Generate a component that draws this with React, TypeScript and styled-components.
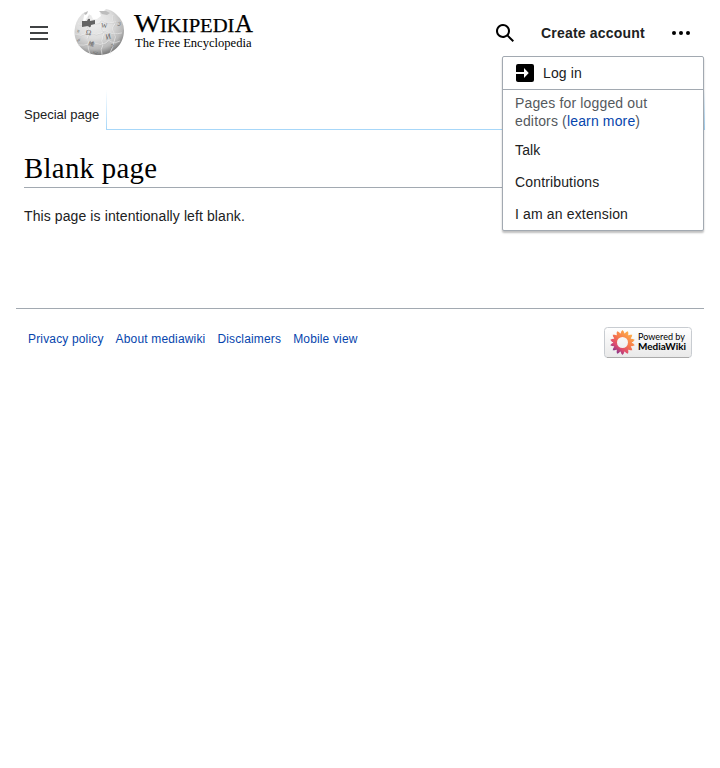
import React from "react";
import styled, { createGlobalStyle } from "styled-components";

const GlobalStyle = createGlobalStyle`
  *, *::before, *::after { box-sizing: border-box; }
  body {
    margin: 0;
    background: #fff;
    color: #202122;
    font: 14px/22px "Liberation Sans", Arial, sans-serif;
  }
`;

const Page = styled.div`
  padding: 0 16px;
`;

const Header = styled.header`
  display: flex;
  align-items: center;
  height: 66px;
  padding: 0 13px;
`;

const Icon = styled.svg<{ $color?: string }>`
  display: block;
  flex: none;
  width: 20px;
  height: 20px;
  fill: ${(p) => p.$color ?? "#000"};
`;

const IconButton = styled.button`
  display: block;
  padding: 0;
  border: 0;
  background: none;
`;

const Logo = styled.a`
  display: flex;
  margin-left: 25px;
  height: 66px;
`;

const Drawing = styled.svg`
  display: block;
  flex: none;
`;

const UserTools = styled.div`
  display: flex;
  align-items: center;
  margin-left: auto;
`;

const CreateAccount = styled.a`
  margin: 0 26px;
  width: 104px;
  font-weight: bold;
  letter-spacing: 0.2px;
  white-space: nowrap;
`;

const MoreTools = styled.div`
  position: relative;
  width: 20px;
`;

const Menu = styled.div`
  position: absolute;
  top: 33px;
  right: -13px;
  z-index: 1;
  width: 202px;
  height: 175px;
  border: 1px solid #a2a9b1;
  border-radius: 2px;
  background: #fff;
  box-shadow: 0 2px 2px rgba(0, 0, 0, 0.25);
  letter-spacing: 0.15px;
`;

const LoginItem = styled.a`
  display: flex;
  align-items: center;
  gap: 8px;
  height: 33px;
  padding: 0 12px;
  border-bottom: 1px solid #a2a9b1;
`;

const MenuNote = styled.p`
  margin: 0;
  padding: 4px 12px 0;
  height: 44px;
  line-height: 18px;
  color: #54595d;
`;

const MenuItem = styled.a`
  display: block;
  height: 32px;
  padding: 0 12px;
  line-height: 32px;
`;

const Link = styled.a`
  color: #0645ad;
`;

const TabBar = styled.nav`
  display: flex;
  height: 40px;
  margin: 24px -1px 0 0;
`;

const ActiveTab = styled.a`
  width: 90px;
  padding: 14px 0 0 8px;
  font-size: 13px;
  white-space: nowrap;
`;

const TabRule = styled.div`
  flex: 1;
  border-bottom: 1px solid #a7d7f9;
  background:
    linear-gradient(to bottom, #fff, #a7d7f9) left / 1px 100% no-repeat,
    linear-gradient(to bottom, #fff, #a7d7f9) right / 1px 100% no-repeat;
`;

const Content = styled.main`
  height: 178px;
  padding: 0 8px;
`;

const Title = styled.h1`
  margin: 0;
  height: 58px;
  padding-top: 20px;
  border-bottom: 1px solid #a2a9b1;
  color: #000;
  font: 400 28.8px/37px "Liberation Serif", serif;
  letter-spacing: 0.3px;
`;

const Paragraph = styled.p`
  margin: 17px 0 0;
  letter-spacing: 0.1px;
`;

const Footer = styled.footer`
  display: flex;
  justify-content: space-between;
  align-items: flex-start;
  padding: 18px 12px 0;
  border-top: 1px solid #a2a9b1;
`;

const FooterLinks = styled.nav`
  display: flex;
  gap: 12px;
  padding-top: 3px;
  font-size: 12px;
  line-height: 18px;
  letter-spacing: 0.16px;
`;

const puzzleSeams = [
  "M4 14q5 3 9 0q1-4 4-2q4 3 8 1q2-5 5-1q5 2 12 0",
  "M1 24q6 3 10 0q2-5 5-1q6 3 12 0q1-4 5-1q6 3 15 1",
  "M4 35q6 1 11-1q2-4 5-1q6 3 12 0q2-4 5-1q4 2 9-1",
  "M15 4q-3 6 0 9q-4 4-1 6q2 6-1 10q3 2 1 5q0 5 2 10",
  "M28 13q-3 5 0 8q4 1 1 5q-2 5 0 9q-3 4-1 10",
  "M39 5q-1 6 2 9q-4 4-1 8q3 5 0 10q-1 5-4 11",
];

const globeLetters: [string, number, number, number, number][] = [
  ["Ω", 11.5, 24.5, 7.5, 8],
  ["W", 27, 17.5, 6.5, 4],
  ["И", 32, 29.5, 7.5, -12],
  ["維", 14, 35, 6, 18],
  ["в", 3, 22, 5, 12],
  ["う", 42, 14, 5, 35],
  ["7", 36, 38, 6, 15],
  ["é", 3, 31, 5, 30],
  ["ت", 19, 43, 5, 10],
];

const Globe = () => (
  <Drawing width="50" height="66" viewBox="0 0 50 66">
    <defs>
      <radialGradient id="globe" cx="40%" cy="28%" r="72%">
        <stop offset="0" stopColor="#f1f1f1" />
        <stop offset=".5" stopColor="#dedede" />
        <stop offset=".82" stopColor="#b9b9b9" />
        <stop offset="1" stopColor="#808080" />
      </radialGradient>
    </defs>
    <g transform="translate(0 10)">
      <path
        fill="url(#globe)"
        d="M8 4l3-2-1 4-1 5h2l3-5 3-1 2 4h4l4-3-1-3 4-2 2-2q6 1 10 5q8 7 8 16.5c0 14-11 24.5-25 24.5S0 34.5 .5 21Q1 11 8 4z"
      />
      <path fill="#bdbdbd" d="M10 3l4-2-1 3-2 1zM25 1l7 0 4 2-3 2-5-1z" />
      <g fill="none" stroke="#f6f6f6" strokeWidth=".6">
        {puzzleSeams.map((d) => (
          <path key={d} d={d} />
        ))}
      </g>
      <g fill="none" stroke="#aaa" strokeWidth=".25" transform="translate(.5 .5)">
        {puzzleSeams.map((d) => (
          <path key={d} d={d} />
        ))}
      </g>
      <path fill="#646464" d="M8 11l5 0q1-3 3-2v2l5-1v4l-4 1q0 3-2 2l-1-1-6 1z" />
      <g fill="#606060" fontFamily="Liberation Serif, Noto Sans CJK SC, DejaVu Sans, serif">
        {globeLetters.map(([letter, x, y, size, angle]) => (
          <text key={letter} fontSize={size} transform={`translate(${x} ${y}) rotate(${angle})`}>
            {letter}
          </text>
        ))}
      </g>
    </g>
  </Drawing>
);

const Wordmark = () => (
  <Drawing
    width="150"
    height="66"
    viewBox="124 0 150 66"
    fontFamily="Liberation Serif, serif"
    fill="#000"
  >
    <g stroke="#000" strokeWidth=".25">
      <text x="134" y="32" fontSize="25.5" textLength="27" lengthAdjust="spacingAndGlyphs">W</text>
      <text x="160" y="32" fontSize="18.5" textLength="74.5" lengthAdjust="spacingAndGlyphs">IKIPEDI</text>
      <text x="234.8" y="32" fontSize="26" textLength="18.2" lengthAdjust="spacingAndGlyphs">A</text>
    </g>
    <text x="135" y="47" fontSize="12.8" textLength="116.5" lengthAdjust="spacingAndGlyphs">
      The Free Encyclopedia
    </text>
  </Drawing>
);

const petals = Array.from({ length: 14 }, (_, i) => (i * 360) / 14);

const MediaWikiBadge = () => (
  <Drawing width="88" height="31" viewBox="0 0 88 31">
    <defs>
      <linearGradient id="badge" x2="0" y2="1">
        <stop stopColor="#fff" />
        <stop offset="1" stopColor="#e9e9e9" />
      </linearGradient>
      <linearGradient id="flower" gradientUnits="userSpaceOnUse" x1="26" y1="6" x2="11" y2="25">
        <stop stopColor="#fdb04a" />
        <stop offset=".45" stopColor="#f6764c" />
        <stop offset=".75" stopColor="#dd4a70" />
        <stop offset="1" stopColor="#82368c" />
      </linearGradient>
      <mask id="flower-shape" maskUnits="userSpaceOnUse" x="0" y="0" width="36" height="31">
        <circle cx="18.5" cy="15.5" r="9.2" fill="#fff" />
        {petals.map((angle) => (
          <path
            key={angle}
            fill="#fff"
            d="M16 8L17.3 4.5L18.5 3L19.7 4.5L21 8z"
            transform={`rotate(${angle} 18.5 15.5)`}
          />
        ))}
        <circle cx="18.5" cy="15.5" r="5.5" fill="#000" />
      </mask>
    </defs>
    <rect x=".5" y=".5" width="87" height="30" rx="3" fill="url(#badge)" stroke="#c8ccd1" />
    <path d="M3 30.5h82" stroke="#aaa" />
    <rect width="36" height="31" fill="url(#flower)" mask="url(#flower-shape)" />
    <g fontFamily="Lato, sans-serif" fill="#000">
      <text x="34" y="12.8" fontSize="9" textLength="47" lengthAdjust="spacingAndGlyphs">Powered by</text>
      <text x="34" y="23.2" fontSize="9.6" fontWeight="700" textLength="48" lengthAdjust="spacingAndGlyphs">
        MediaWiki
      </text>
    </g>
  </Drawing>
);

export default function App() {
  return (
    <>
      <GlobalStyle />
      <Page>
        <Header>
          <IconButton aria-label="Toggle sidebar">
            <Icon $color="#404244" viewBox="0 0 20 20">
              <path d="M1 3v2h18V3zm0 8h18V9H1zm0 6h18v-2H1z" />
            </Icon>
          </IconButton>
          <Logo>
            <Globe />
            <Wordmark />
          </Logo>
          <UserTools>
            <IconButton aria-label="Search">
              <Icon viewBox="0 0 20 20">
                <path d="M12.2 13.6a7 7 0 1 1 1.4-1.4l5.4 5.4-1.4 1.4zM3 8a5 5 0 1 0 10 0A5 5 0 0 0 3 8" />
              </Icon>
            </IconButton>
            <CreateAccount>Create account</CreateAccount>
            <MoreTools>
              <IconButton aria-label="More options">
                <Icon viewBox="0 0 20 20">
                  <circle cx="3" cy="10" r="2" />
                  <circle cx="10" cy="10" r="2" />
                  <circle cx="17" cy="10" r="2" />
                </Icon>
              </IconButton>
              <Menu>
                <LoginItem>
                  <Icon viewBox="0 0 20 20">
                    <path d="M1 11v6c0 1.1.9 2 2 2h14a2 2 0 0 0 2-2V3a2 2 0 0 0-2-2H3a2 2 0 0 0-2 2v6h8V5l4.75 5L9 15v-4z" />
                  </Icon>
                  Log in
                </LoginItem>
                <MenuNote>
                  Pages for logged out
                  <br />
                  editors (<Link>learn more</Link>)
                </MenuNote>
                <MenuItem>Talk</MenuItem>
                <MenuItem>Contributions</MenuItem>
                <MenuItem>I am an extension</MenuItem>
              </Menu>
            </MoreTools>
          </UserTools>
        </Header>
        <TabBar>
          <ActiveTab>Special page</ActiveTab>
          <TabRule />
        </TabBar>
        <Content>
          <Title>Blank page</Title>
          <Paragraph>This page is intentionally left blank.</Paragraph>
        </Content>
        <Footer>
          <FooterLinks>
            <Link>Privacy policy</Link>
            <Link>About mediawiki</Link>
            <Link>Disclaimers</Link>
            <Link>Mobile view</Link>
          </FooterLinks>
          <MediaWikiBadge />
        </Footer>
      </Page>
    </>
  );
}
